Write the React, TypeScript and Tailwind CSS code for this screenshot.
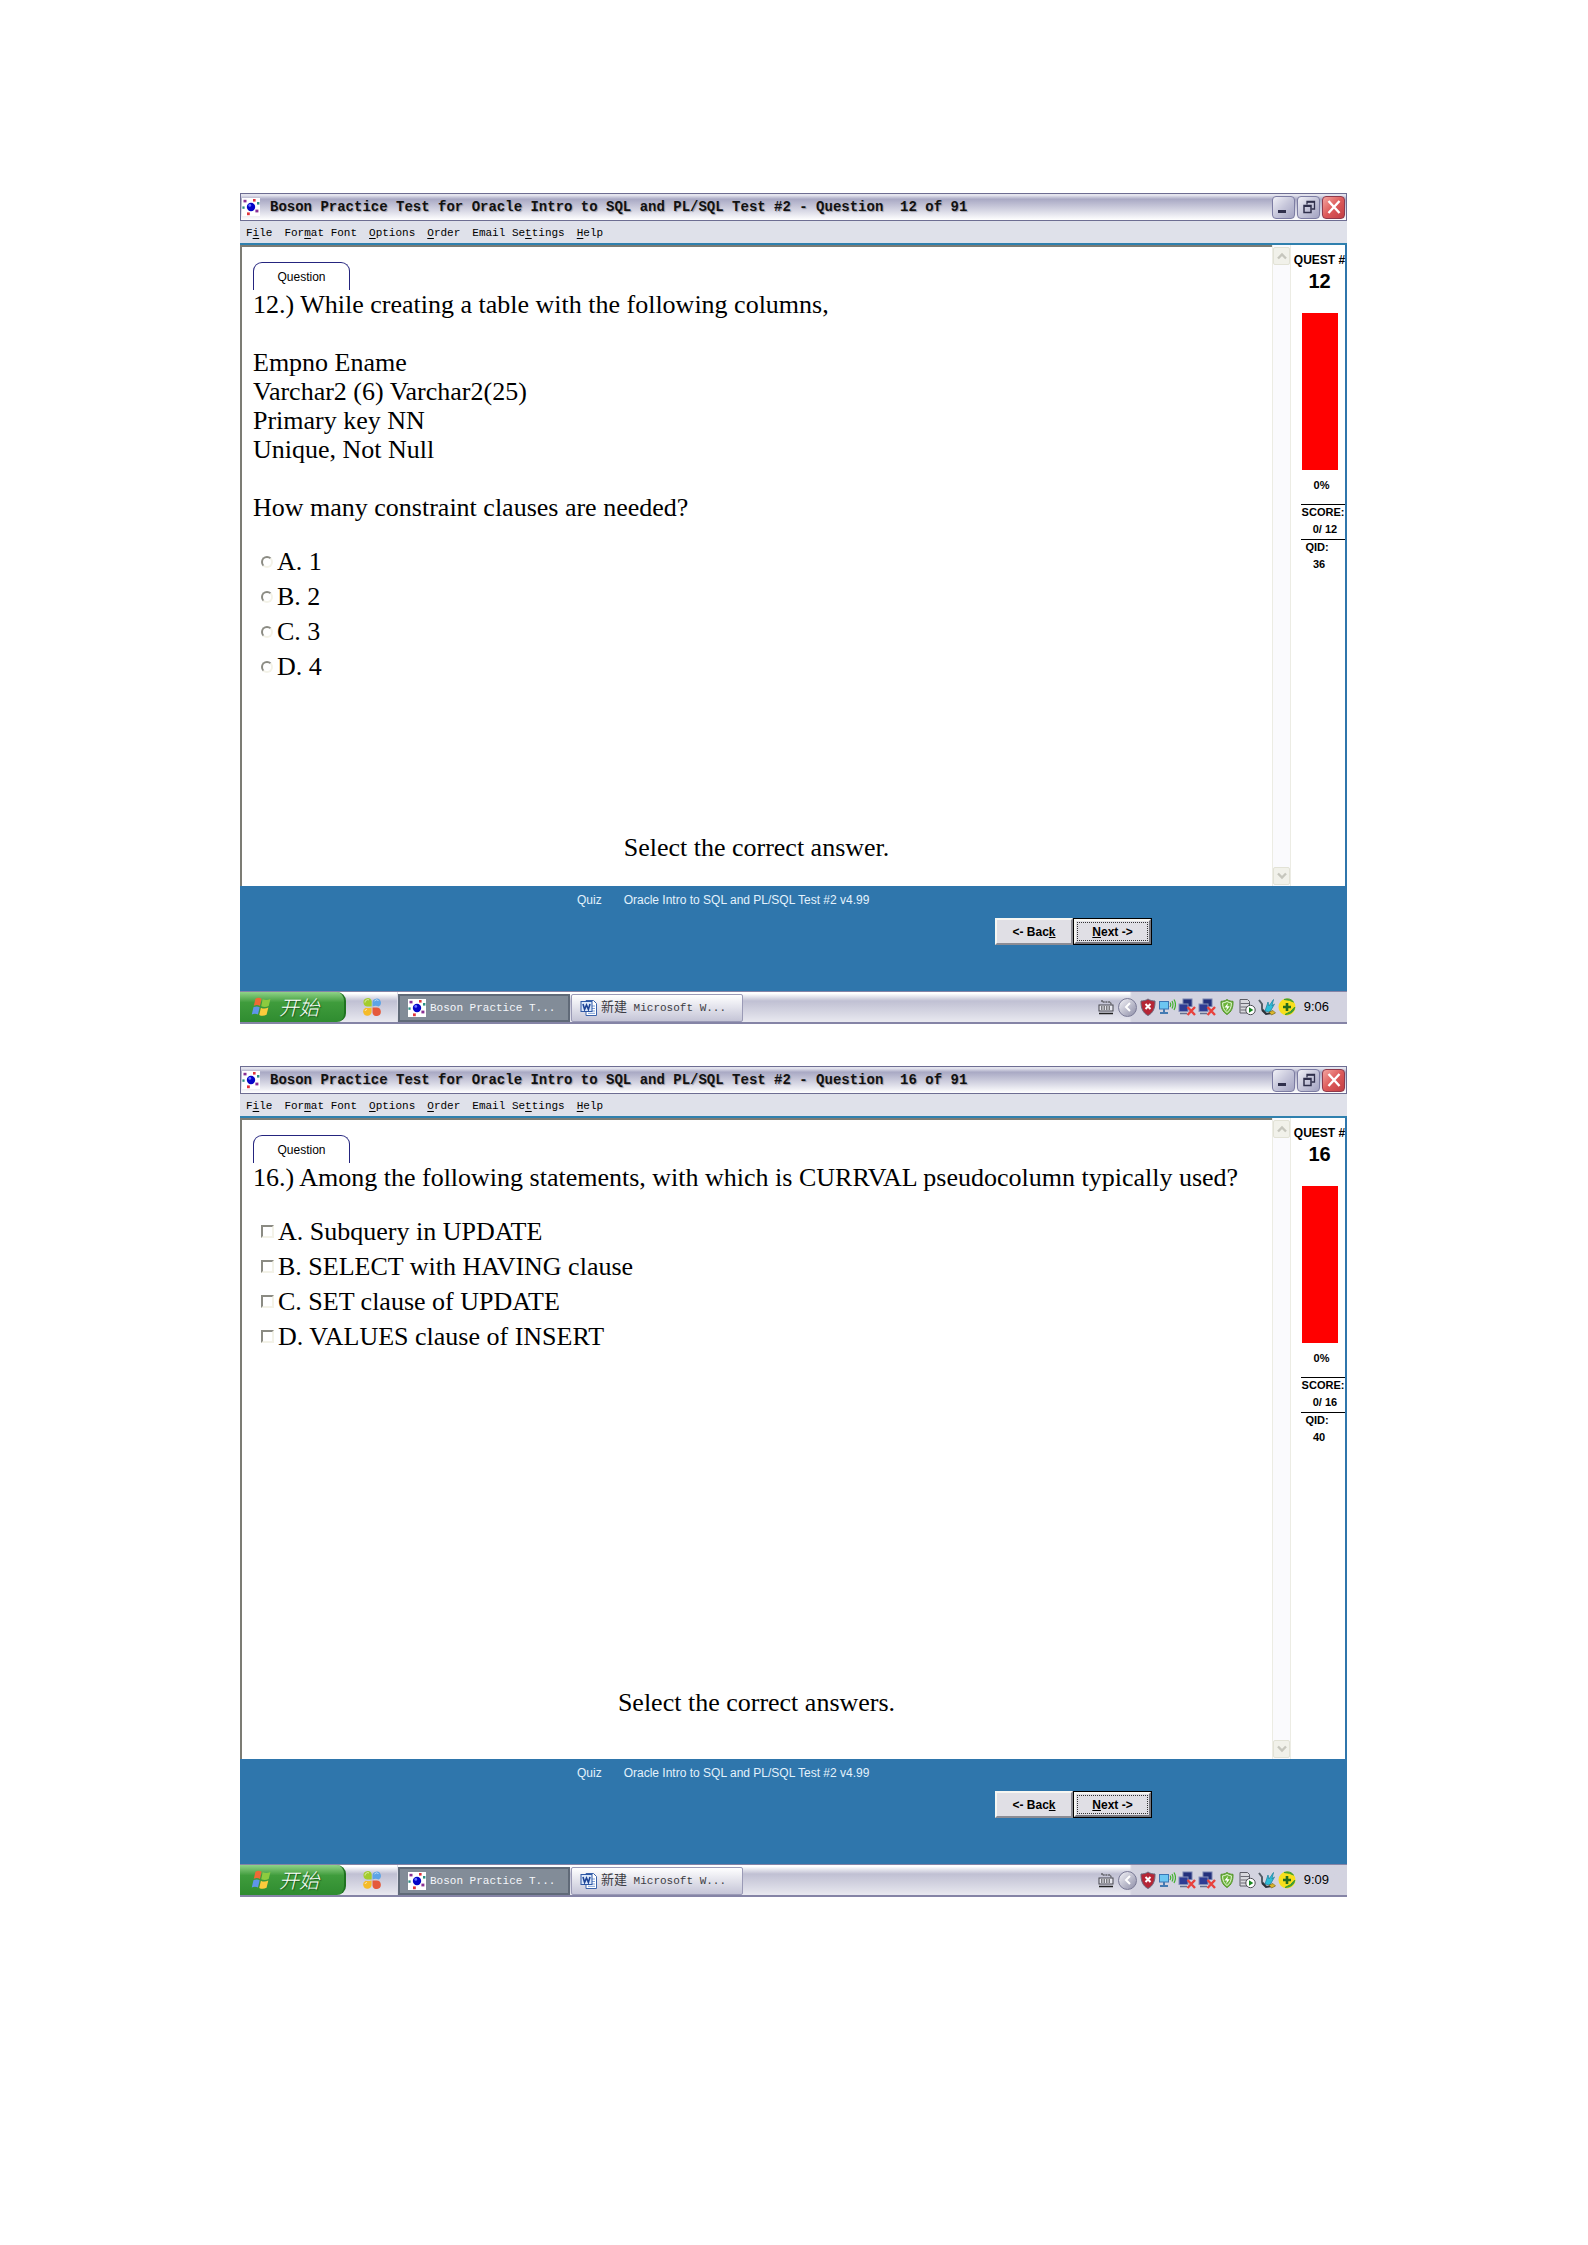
import React from 'react';

type Choice = { letter: string; text: string };

type Quiz = {
  id: string;
  number: number;
  lines: string[];
  kind: 'radio' | 'checkbox';
  choices: Choice[];
  hint: string;
  hintPad: string;
  qid: number;
  time: string;
};

const quizzes: Quiz[] = [
  {
    id: 'q12',
    number: 12,
    lines: [
      '12.) While creating a table with the following columns,',
      '',
      'Empno Ename',
      'Varchar2 (6) Varchar2(25)',
      'Primary key NN',
      'Unique, Not Null',
      '',
      'How many constraint clauses are needed?',
    ],
    kind: 'radio',
    choices: [
      { letter: 'A', text: '1' },
      { letter: 'B', text: '2' },
      { letter: 'C', text: '3' },
      { letter: 'D', text: '4' },
    ],
    hint: 'Select the correct answer.',
    hintPad: 'pb-6',
    qid: 36,
    time: '9:06',
  },
  {
    id: 'q16',
    number: 16,
    lines: ['16.) Among the following statements, with which is CURRVAL pseudocolumn typically used?'],
    kind: 'checkbox',
    choices: [
      { letter: 'A', text: 'Subquery in UPDATE' },
      { letter: 'B', text: 'SELECT with HAVING clause' },
      { letter: 'C', text: 'SET clause of UPDATE' },
      { letter: 'D', text: 'VALUES clause of INSERT' },
    ],
    hint: 'Select the correct answers.',
    hintPad: 'pb-[42px]',
    qid: 40,
    time: '9:09',
  },
];

const menus: [string, string, string][] = [
  ['F', 'i', 'le'],
  ['For', 'm', 'at Font'],
  ['', 'O', 'ptions'],
  ['', 'O', 'rder'],
  ['Email Se', 't', 'tings'],
  ['', 'H', 'elp'],
];

const mono = "font-['Liberation_Mono','Noto_Sans_CJK_SC',monospace]";
const sans = "font-['Liberation_Sans',sans-serif]";
const serif = "font-['Liberation_Serif',serif]";

function AtomIcon() {
  return (
    <svg viewBox="0 0 18 18" className="size-[18px] shrink-0" aria-hidden="true">
      <rect width="18" height="18" fill="#fff" />
      <circle cx="9" cy="9" r="4.2" fill="#0606c8" />
      <circle cx="7.8" cy="7.4" r="1.4" fill="#6a78ff" />
      <g>
        <rect x="1.5" y="1.8" width="3" height="2.6" fill="#8a2f93" />
        <rect x="11" y="1" width="2.6" height="2.6" fill="#e0353c" />
        <rect x="15" y="4" width="2.4" height="2.6" fill="#2c8f84" />
        <rect x="0.4" y="8.4" width="2.2" height="2.4" fill="#2c8f84" />
        <rect x="13.4" y="11.6" width="3" height="2.8" fill="#8a2f93" />
        <rect x="5" y="14.4" width="2.8" height="2.8" fill="#e0353c" />
      </g>
    </svg>
  );
}

function CaptionButton({ label, red, children }: { label: string; red?: boolean; children: React.ReactNode }) {
  return (
    <button
      type="button"
      aria-label={label}
      className={
        red
          ? 'flex size-[23px] items-center justify-center rounded-[4px] border border-[#8f3a4c] bg-linear-to-br from-[#f2a3a0] via-[#dd5a5a] to-[#c23f45]'
          : 'flex size-[23px] items-center justify-center rounded-[4px] border border-[#7d7da3] bg-linear-to-br from-[#f1f1f7] via-[#c6c6da] to-[#a3a3c2]'
      }
    >
      {children}
    </button>
  );
}

function TitleBar({ number }: { number: number }) {
  return (
    <header className="flex h-7 items-center gap-[10px] border border-[#6d6d92] bg-linear-to-b from-[#e4e4ee] from-5% via-[#a9a9c4] via-20% to-white pr-px pl-px">
      <AtomIcon />
      <h1 className={`${mono} flex-1 text-[14px] leading-5 font-bold whitespace-pre text-[#111] [text-shadow:1px_1px_1px_#9a9aa8]`}>
        {`Boson Practice Test for Oracle Intro to SQL and PL/SQL Test #2 - Question  ${number} of 91`}
      </h1>
      <div className="flex gap-[2px]">
        <CaptionButton label="Minimize">
          <svg viewBox="0 0 20 20" className="size-5" aria-hidden="true">
            <rect x="4" y="13" width="8" height="3" fill="#30304c" />
          </svg>
        </CaptionButton>
        <CaptionButton label="Restore">
          <svg viewBox="0 0 20 20" className="size-5" fill="none" stroke="#30304c" aria-hidden="true">
            <path d="M8 7.500V4.500H15.500V12H12.500" strokeWidth="1.300" />
            <path d="M8 5H15.500" strokeWidth="1.600" />
            <rect x="5" y="8.500" width="7" height="7" strokeWidth="1.500" />
            <path d="M5 9.200H12" strokeWidth="1.600" />
          </svg>
        </CaptionButton>
        <CaptionButton label="Close" red>
          <svg viewBox="0 0 20 20" className="size-5" aria-hidden="true">
            <path d="M4.500 4L15.500 16M15.500 4L4.500 16" stroke="#fff" strokeWidth="2.400" />
          </svg>
        </CaptionButton>
      </div>
    </header>
  );
}

function MenuBar() {
  return (
    <nav className={`${mono} flex h-[22px] items-center gap-3 bg-[#dfe1ea] pt-px pl-[6px] text-[11px] leading-4 text-black`}>
      {menus.map(([before, key, after]) => (
        <button type="button" key={before + key + after} className="whitespace-pre">
          {before}
          <span className="underline underline-offset-2">{key}</span>
          {after}
        </button>
      ))}
    </nav>
  );
}

function ScrollArrow({ label, d }: { label: string; d: string }) {
  return (
    <button
      type="button"
      aria-label={label}
      className="flex h-[18px] w-full items-center justify-center rounded-[2px] border border-[#e2e2d6] bg-[#f1f1ea]"
    >
      <svg viewBox="0 0 12 10" className="h-[10px] w-3" aria-hidden="true">
        <path d={d} fill="none" stroke="#c6c6bd" strokeWidth="2.400" />
      </svg>
    </button>
  );
}

function Question({ quiz }: { quiz: Quiz }) {
  const box =
    quiz.kind === 'radio'
      ? 'size-3 shrink-0 appearance-none rounded-full border-2 border-[#f3f2e8] border-t-[#8b8b83] border-l-[#8b8b83] bg-white'
      : 'size-[13px] shrink-0 appearance-none border-2 border-[#f3f2e8] border-t-[#8b8b83] border-l-[#8b8b83] bg-white';
  return (
    <section className={`${serif} flex min-w-0 flex-1 flex-col border-t-2 border-l-2 border-[#7c7c74] pt-[15px] pl-[11px] text-[26px] leading-[29px] text-black`}>
      <div className={`${sans} flex h-7 w-[97px] items-center justify-center rounded-t-[9px] border-t border-r border-l border-[#25257f] text-[12px] leading-4`}>
        Question
      </div>
      <div>
        {quiz.lines.map((line, i) => (
          <p key={i} className="min-h-[29px]">
            {line}
          </p>
        ))}
      </div>
      <div className="mt-[22px] flex flex-col items-start pl-2">
        {quiz.choices.map((choice) => (
          <label key={choice.letter} className="flex h-[35px] items-center gap-[4px]">
            <input type={quiz.kind} name={quiz.id} value={choice.letter} className={box} />
            <span>{`${choice.letter}. ${choice.text}`}</span>
          </label>
        ))}
      </div>
      <p className={`mt-auto pr-3 text-center ${quiz.hintPad}`}>{quiz.hint}</p>
    </section>
  );
}

function ScorePanel({ quiz }: { quiz: Quiz }) {
  return (
    <aside className={`${sans} flex w-14 shrink-0 flex-col items-center border-r-2 border-[#2f76ac] bg-white pt-2 pl-[3px] text-[11px] leading-[14px] font-bold text-black`}>
      <p className="text-[12px] whitespace-nowrap">QUEST #</p>
      <p className="mt-[2px] text-[20px] leading-6">{quiz.number}</p>
      <div className="mt-5 h-[157px] w-9 bg-[#ff0000]" />
      <p className="mt-2 pl-1">0%</p>
      <div className="mt-3 flex w-11 flex-col items-center self-end">
        <p className="w-full border-t border-black text-center whitespace-nowrap">SCORE:</p>
        <p className="mt-[3px] pl-1 whitespace-nowrap">0/ {quiz.number}</p>
        <p className="mt-[3px] w-full border-t border-black pr-3 text-center">QID:</p>
        <p className="mt-[3px] pr-2">{quiz.qid}</p>
      </div>
    </aside>
  );
}

function Footer() {
  return (
    <footer className={`${sans} h-[105px] bg-[#2f76ac] pt-1 text-[12px]`}>
      <div className="flex gap-[22px] pl-[337px] leading-5 text-[#e3f2fc]">
        <span>Quiz</span>
        <span>Oracle Intro to SQL and PL/SQL Test #2 v4.99</span>
      </div>
      <div className="mt-2 flex justify-end pr-[195px] font-bold text-black">
        <button type="button" className="h-[27px] w-[78px] border-2 border-[#f6f6f2] border-r-[#8c8c94] border-b-[#8c8c94] bg-[#e0dfe5]">
          &lt;- Bac<span className="underline">k</span>
        </button>
        <button type="button" className="h-[27px] w-[79px] border border-black bg-[#e0dfe5]">
          <span className="flex h-full items-center justify-center border-2 border-[#f6f6f2] border-r-[#77777f] border-b-[#77777f] p-px">
            <span className="flex h-full w-full items-center justify-center border border-dotted border-[#333]">
              <span className="whitespace-pre"><span className="underline">N</span>{'ext ->'}</span>
            </span>
          </span>
        </button>
      </div>
    </footer>
  );
}

function WindowsFlag() {
  return (
    <svg viewBox="1 1 19 18" className="h-5 w-[22px]" aria-hidden="true">
      <path d="M5.500 2.500C7.500 1.200 9.500 1.500 11 2.600L9.600 9C8 8 6 7.800 4 9Z" fill="#ee6a35" />
      <path d="M12 3C14 4 16.500 4 19 2.800L17.400 9.200C15 10.400 12.500 10.200 10.700 9.300Z" fill="#8ccb3f" />
      <path d="M3.700 10.200C5.700 9.200 7.700 9.300 9.300 10.200L7.800 16.800C6.200 15.800 4 15.700 2.200 16.800Z" fill="#5f95ea" />
      <path d="M10.400 10.600C12.300 11.600 14.600 11.700 17.100 10.500L15.500 17C13.200 18.300 10.700 18.200 8.900 17.200Z" fill="#fbcb3c" />
    </svg>
  );
}

function PetalIcon() {
  return (
    <svg viewBox="0 0 18 18" className="size-[18px]" aria-hidden="true">
      <path d="M8.700 8.500H4.800A4.200 4.200 0 1 1 8.700 3.200Z" fill="#a3cc2b" />
      <path d="M9.500 5A4.200 4.200 0 1 1 15.500 8.600Q13 7.200 9.500 8.500Z" fill="#5da4e6" />
      <path d="M8.600 9.400V13.500A4.200 4.200 0 1 1 2.600 9.700Q5.500 10.500 8.600 9.400Z" fill="#f5bb29" />
      <path d="M9.500 9.600H13.500A4.200 4.200 0 1 1 9.500 14.500Z" fill="#e5593c" />
      <path d="M2 4.500A2.800 2.800 0 0 1 6 1.900M11.500 3A2.800 2.800 0 0 1 15.500 2.600M2 13A2 2 0 0 1 4 11.500" stroke="#fff" strokeOpacity=".6" fill="none" />
    </svg>
  );
}

function WordIcon() {
  return (
    <svg viewBox="0 0 18 18" className="size-[18px] shrink-0" aria-hidden="true">
      <path d="M6 1.500H13.500L16.500 4.500V16.500H6Z" fill="#fff" stroke="#3b63ab" />
      <path d="M8 7H15M8 9.500H15M8 12H15M8 14.300H15" stroke="#7ea0d8" />
      <rect x="1" y="2.500" width="11" height="10" fill="#dbe8fb" stroke="#2d57a5" />
      <path d="M3 5L4.600 10.400L6.500 6L8.400 10.400L10 5" fill="none" stroke="#1d4496" strokeWidth="1.600" />
    </svg>
  );
}

function NetworkOff() {
  return (
    <svg viewBox="0 0 18 18" className="size-[18px]" aria-hidden="true">
      <rect x="5" y="1" width="9" height="7.500" fill="#23307c" stroke="#7884b0" />
      <rect x="1" y="6" width="9" height="7.500" fill="#2e3c94" stroke="#8690ba" />
      <path d="M2 15.500H9" stroke="#66708f" strokeWidth="1.500" />
      <path d="M9.500 9L17 17M17 9L9.500 17" stroke="#e8413c" strokeWidth="2.400" />
    </svg>
  );
}

function TrayIcons() {
  return (
    <div className="flex items-center gap-[2px]">
      <svg viewBox="1 0 16 18" className="h-[18px] w-4" aria-hidden="true">
        <path d="M9 1C11 2.500 13.500 3 16 3C16.300 10 14 15 9 17.500C4 15 1.700 10 2 3C4.500 3 7 2.500 9 1Z" fill="#b52636" stroke="#69677c" />
        <path d="M6.500 6L11.500 11M11.500 6L6.500 11" stroke="#fff" strokeWidth="2" />
      </svg>
      <svg viewBox="0 0 18 18" className="size-[18px]" aria-hidden="true">
        <rect x="1.500" y="3.500" width="9" height="7.500" fill="#6cc6f2" stroke="#3b76b5" />
        <path d="M6 11V14M2 15H10" stroke="#447ab2" strokeWidth="2" />
        <path d="M12 4.500Q13.500 6.500 12 9M14 3Q16 6.500 14 10.500M16 1.500Q19 6.500 16 12" fill="none" stroke="#41b02e" strokeWidth="1.200" />
      </svg>
      <NetworkOff />
      <NetworkOff />
      <svg viewBox="0 0 18 18" className="size-[18px]" aria-hidden="true">
        <path d="M9 1.500C11 3 13 3.300 15 3.300C15.300 9.500 13.500 14 9 16.500C4.500 14 2.700 9.500 3 3.300C5 3.300 7 3 9 1.500Z" fill="#6cb53a" stroke="#55922e" />
        <path d="M9 3.500C10.500 4.400 12 4.800 13.400 4.900C13.400 9.500 12 12.500 9 14.500C6 12.500 4.600 9.500 4.600 4.900C6 4.800 7.500 4.400 9 3.500Z" fill="none" stroke="#e6f6da" />
        <path d="M10 5L6.500 9.500H9L8 13L11.700 8.200H9.300Z" fill="#fff" />
      </svg>
      <svg viewBox="0 0 18 18" className="size-[18px]" aria-hidden="true">
        <path d="M2 1.500H9.500L11.500 3.500V15H2Z" fill="#d9d9de" stroke="#5d5d66" />
        <path d="M2.500 5.500H11M2.500 9H11M2.500 12H8" stroke="#6c6c75" strokeWidth="1.200" />
        <circle cx="12.500" cy="12" r="4.700" fill="#fff" stroke="#4b4b52" />
        <path d="M11 9.300L15.300 12L11 14.700Z" fill="#17871f" />
      </svg>
      <svg viewBox="0 0 18 18" className="size-[18px]" aria-hidden="true">
        <path d="M1 2L4 6V11L8 15" fill="none" stroke="#555d66" strokeWidth="2" />
        <path d="M7 13L10 4L11 8L15.500 1.500L14 8L16.500 6L12 14Z" fill="#2bbdd8" stroke="#197f9b" strokeWidth=".7" />
        <path d="M4 12L8 16L14 15" fill="none" stroke="#2b3138" strokeWidth="1.800" />
        <path d="M11 14L15 12.500L17.500 15L13.500 17Z" fill="#d9b62b" stroke="#6c5712" strokeWidth=".6" />
      </svg>
      <svg viewBox="0 0 18 18" className="size-[18px]" aria-hidden="true">
        <circle cx="9" cy="9" r="8.500" fill="#f7df1c" />
        <path d="M6 1.500Q12 -0.500 15.500 4Q12 1.800 6 1.500ZM16.800 9Q16 16 7 16.500Q13 14.500 16.800 9Z" fill="#3d9c33" stroke="#3d9c33" />
        <path d="M9 5V13M5 9H13" stroke="#246b1d" strokeWidth="2.600" />
      </svg>
    </div>
  );
}

function Taskbar({ time }: { time: string }) {
  return (
    <div className="flex h-[33px] items-stretch border-t border-b-2 border-[#8584a6] bg-linear-to-b from-white from-5% via-[#c0c0d3] via-30% to-[#e9e9f0]">
      <button
        type="button"
        className="flex w-[106px] shrink-0 items-center gap-[7px] rounded-r-[9px] border-r-2 border-[#1f7320] bg-linear-to-b from-[#8fd387] via-[#3f9c3c] via-35% to-[#2f8c30] pl-[10px] text-white"
      >
        <WindowsFlag />
        <span className="font-['Noto_Sans_CJK_SC',sans-serif] text-[20px] leading-6 font-light italic [text-shadow:1px_1px_1px_#1c5a1c]">开始</span>
      </button>
      <div className="flex w-[52px] shrink-0 items-center justify-center border-r border-[#dcdce8]">
        <PetalIcon />
      </div>
      <div className={`${mono} flex items-stretch gap-px pt-[2px] text-[11px] leading-4`}>
        <button type="button" className="flex w-[172px] items-center gap-1 border-2 border-[#606a78] bg-[#828c98] pl-2 whitespace-pre text-[#f4f6fa]">
          <AtomIcon />
          <span>Boson Practice T...</span>
        </button>
        <button type="button" className="flex w-[172px] items-center gap-[3px] rounded-[2px] border border-[#9a9ab6] bg-linear-to-b from-white to-[#c5c5d7] pl-2 whitespace-pre text-[#3c3c44]">
          <WordIcon />
          <span><span className="text-[13px]">新建</span>{' Microsoft W...'}</span>
        </button>
      </div>
      <div className="ml-auto flex items-center pr-1">
        <svg viewBox="0 0 16 16" className="size-4" aria-hidden="true">
          <path d="M4 1V3H12Q13 3 13 5.500" fill="none" stroke="#333" strokeDasharray="2 .7" />
          <rect x="1" y="6" width="14" height="6" fill="#e6e6ee" stroke="#44444c" />
          <path d="M3 8H13M3 10H13" stroke="#111" strokeDasharray="1.500 1" />
          <path d="M1 14.500H15" stroke="#222" strokeWidth="1.500" />
        </svg>
      </div>
      <div className="flex w-[229px] shrink-0 items-center bg-linear-to-r from-transparent from-5% to-[#d3d3e0] to-6%">
        <button type="button" aria-label="Show hidden icons" className="flex size-[19px] items-center justify-center rounded-full border border-[#7a7a96] bg-linear-to-br from-[#f4f4f8] to-[#8f8fa8]">
          <svg viewBox="0 0 12 12" className="size-3" aria-hidden="true">
            <path d="M8 2L4 6L8 10" fill="none" stroke="#fff" strokeWidth="2" />
          </svg>
        </button>
        <div className="pl-[3px]">
          <TrayIcons />
        </div>
        <span className={`${sans} ml-auto pr-[18px] text-[13px] leading-4 text-black`}>{time}</span>
      </div>
    </div>
  );
}

function QuizWindow({ quiz }: { quiz: Quiz }) {
  return (
    <article>
      <TitleBar number={quiz.number} />
      <MenuBar />
      <div className="flex min-h-[643px] items-stretch border-t-2 border-[#2f80ae] bg-white">
        <Question quiz={quiz} />
        <div className="flex w-[19px] shrink-0 flex-col justify-between border-x border-[#ecece4] bg-[#fafafd] pt-[2px] pb-px">
          <ScrollArrow label="Scroll up" d="M2 7.500L6 3.500L10 7.500" />
          <ScrollArrow label="Scroll down" d="M2 2.500L6 6.500L10 2.500" />
        </div>
        <ScorePanel quiz={quiz} />
      </div>
      <Footer />
      <Taskbar time={quiz.time} />
    </article>
  );
}

export default function App() {
  return (
    <main className="flex min-h-screen flex-col gap-[42px] bg-white pt-[193px] pr-[241px] pl-60">
      {quizzes.map((quiz) => (
        <QuizWindow key={quiz.id} quiz={quiz} />
      ))}
    </main>
  );
}
